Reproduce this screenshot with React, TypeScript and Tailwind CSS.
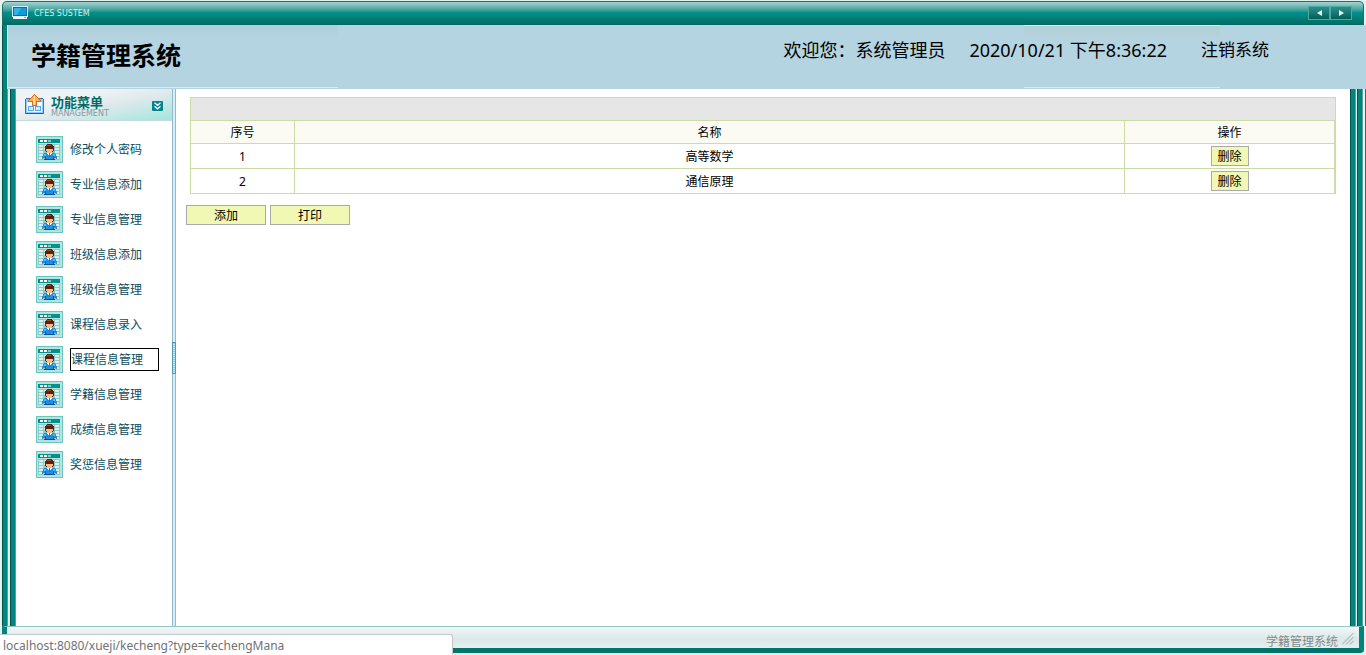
import { useState } from "react";

const menuItems = [
  "修改个人密码",
  "专业信息添加",
  "专业信息管理",
  "班级信息添加",
  "班级信息管理",
  "课程信息录入",
  "课程信息管理",
  "学籍信息管理",
  "成绩信息管理",
  "奖惩信息管理",
];

const initialCourses = [
  { id: 1, name: "高等数学" },
  { id: 2, name: "通信原理" },
];

function MonitorIcon() {
  return (
    <svg width="16" height="13" viewBox="0 0 16 13" shapeRendering="crispEdges" aria-hidden="true">
      <rect width="16" height="11" fill="#d5eef5" />
      <rect x="1" y="1" width="14" height="9" fill="#0a6fa8" />
      <rect x="2" y="2" width="12" height="7" fill="#129bd6" />
      <path d="M2 2h7l-4 7H2z" fill="#2fb4e6" />
      <rect x="1" y="11" width="14" height="2" fill="#f4f4ee" />
      <rect x="12" y="11" width="2" height="1" fill="#e08a3c" />
    </svg>
  );
}

function UploadIcon() {
  return (
    <svg width="19" height="21" viewBox="0 0 19 21" shapeRendering="crispEdges" aria-hidden="true">
      <path d="M1 4h17v1h1v15H0V5h1z" fill="#2a78d6" />
      <rect x="1" y="5" width="17" height="14" fill="#8ecbfa" />
      <rect x="1" y="19" width="17" height="1" fill="#2459a8" />
      <rect x="2" y="8" width="15" height="10" fill="#f2faff" />
      <path d="M3 12h6v5H3zM10 12h6v5h-6z" fill="#5aa6ea" />
      <path d="M4 13h4v3H4zM11 13h4v3h-4z" fill="#d2ebff" />
      <path d="M9 0h1v1h1v1h1v1h1v1h1v1h1v1h1v2h-4v4H7V8H3V6h1V5h1V4h1V3h1V2h1V1h1z" fill="#e8690f" />
      <path d="M9 1h1v1h1v1h1v1h1v1h1v1h1v1h-4v4H8V7H4V6h1V5h1V4h1V3h1V2h1z" fill="#fdb04a" />
      <path d="M9 2h1v9H8V5h1z" fill="#ffdca0" />
    </svg>
  );
}

function CollapseIcon() {
  return (
    <svg width="11" height="10" viewBox="0 0 11 10" aria-hidden="true">
      <rect width="11" height="10" rx="1" fill="#008490" />
      <path d="M2.500 1.800L5.500 4.300l3-2.500M2.500 5.300l3 2.500 3-2.500" fill="none" stroke="#fff" strokeWidth="1.300" />
    </svg>
  );
}

function UserCardIcon() {
  return (
    <svg width="27" height="27" viewBox="0 0 27 27" shapeRendering="crispEdges" className="shrink-0" aria-hidden="true">
      <rect width="27" height="27" fill="#6cc5be" />
      <rect x="1" y="1" width="25" height="25" fill="#b4e4e0" />
      <rect x="2" y="3" width="22" height="4" fill="#00928a" />
      <path d="M4 4h3v2H4zM8 4h3v2H8z" fill="#fff" />
      <path d="M12 4h3v2h-3z" fill="#7fd0ca" />
      <rect x="2" y="8" width="22" height="16" fill="#8ccbc6" />
      <path d="M3 9h4v2H3zM8 9h10v2H8zM19 9h4v2h-4zM3 12h4v2H3zM8 12h10v2H8zM19 12h4v2h-4zM3 15h4v2H3zM19 15h4v2h-4zM3 18h4v2H3zM19 18h4v2h-4zM3 21h20v2H3z" fill="#d8f0ed" />
      <path d="M11 8h5v1h1v1h1v5h-1v1h-7v-1H9v-5h1V9h1z" fill="#5e1f0e" />
      <path d="M10 13h7v2h-1v2h-5v-2h-1z" fill="#f7bd82" />
      <path d="M11 9h4v1h-4z" fill="#a34b22" />
      <path d="M8 17h11v1h1v2h1v3H6v-3h1v-2h1z" fill="#1c8fe0" />
      <path d="M8 18h2v2H8zM17 18h2v2h-2z" fill="#5cbcf7" />
      <path d="M9 20h1v3H9zM17 20h1v3h-1z" fill="#0a5cb0" />
      <path d="M7 22h2v1H7zM18 22h2v1h-2z" fill="#f2a868" />
      <path d="M11 17h5v1h-1v1h-3v-1h-1z" fill="#fff" />
      <path d="M13 17h1v4h-1z" fill="#e0321c" />
      <path d="M8 23h11v1H8z" fill="#0a4c9a" />
    </svg>
  );
}

/* thin metallic strips that run down both sides of the window */
function Rail() {
  return <div className="w-[6px] shrink-0 border-l border-r border-l-[#00544c] border-r-[#5b9f98] bg-[#00847b]" />;
}

function PagerButton({ label, flip = false }: { label: string; flip?: boolean }) {
  return (
    <button
      type="button"
      aria-label={label}
      className="flex h-[14px] w-[22px] items-center justify-center border border-[#4fa8a2] bg-linear-to-b from-[#2b8f8b] to-[#00605c]"
    >
      <svg width="5" height="6" viewBox="0 0 5 6" aria-hidden="true">
        <path d={flip ? "M0 0l5 3-5 3z" : "M5 0L0 3l5 3z"} fill="#e2f6f4" />
      </svg>
    </button>
  );
}

function TitleBar() {
  return (
    <div className="mx-[2px] mt-px flex h-6 shrink-0 items-center justify-between rounded-t-[5px] border border-b-0 border-[#1f6f69] bg-linear-to-b from-[#a5d5d3] via-[#00918b] via-45% to-[#006b62] pr-[11px] pb-[2px] pl-[9px]">
      <div className="flex items-center gap-[6px]">
        <MonitorIcon />
        <span className="pt-[2px] font-['DejaVu_Sans',sans-serif] text-[8px] leading-none text-[#d0efec]">CFES SUSTEM</span>
      </div>
      <div className="flex">
        <PagerButton label="后退" />
        <PagerButton label="前进" flip />
      </div>
    </div>
  );
}

function Banner() {
  return (
    <header className="relative flex h-16 shrink-0 items-start justify-between border-l border-[#d5e9ee] bg-[#b5d4e2] pr-[97px] pl-[23px]">
      <div className="absolute top-0 left-0 h-[63px] w-[330px] border-b border-[#d6ecf2] bg-linear-to-b from-[#afcfdc] to-[#b5d4e2] to-25%" />
      <div className="absolute top-0 right-[146px] h-[63px] w-[196px] border-t border-b border-[#d6eef3] bg-linear-to-b from-[#b3cfd4] to-[#b5d4e2] to-25%" />
      <h1 className="relative pt-3 text-[25px] leading-9 font-bold">学籍管理系统</h1>
      <div className="relative flex pt-3 text-[18px] leading-[26px]">
        <span className="mr-6">欢迎您：系统管理员</span>
        <span className="mr-[34px]">2020/10/21 下午8:36:22</span>
        <a href="#logout" className="text-[17px]">注销系统</a>
      </div>
    </header>
  );
}

function Sidebar({ active, onSelect }: { active: string; onSelect: (item: string) => void }) {
  return (
    <aside className="w-[156px] shrink-0 bg-white">
      <div className="flex h-8 items-center border-b border-[#c5dcdc] bg-linear-to-br from-[#f0f3f5] from-30% via-[#dfe9ec] via-55% to-[#9fe6de] pr-[9px] pl-[9px]">
        <UploadIcon />
        <div className="ml-[7px] grow pt-[2px]">
          <div className="text-[13px] leading-4 font-bold text-[#006b66]">功能菜单</div>
          <div className="font-['DejaVu_Sans',sans-serif] text-[8px] leading-[8px] text-[#8b9999]">MANAGEMENT</div>
        </div>
        <button type="button" aria-label="收起菜单" className="pt-[2px]">
          <CollapseIcon />
        </button>
      </div>
      <nav className="flex flex-col gap-2 pt-[15px] pl-5">
        {menuItems.map((item) => (
          <div key={item} className="flex items-center gap-[7px]">
            <UserCardIcon />
            <a
              href="#menu"
              onClick={() => onSelect(item)}
              className={
                item === active
                  ? "w-[89px] border border-black text-[12px] leading-[21px] text-[#0b4d5c]"
                  : "w-[89px] border-y border-transparent text-[12px] leading-[21px] text-[#0b4d5c]"
              }
            >
              {item}
            </a>
          </div>
        ))}
      </nav>
    </aside>
  );
}

function Divider() {
  return (
    <div className="flex w-1 shrink-0 flex-col justify-center border-x border-[#94b9c8] bg-[#d5eefa]">
      <div className="-mx-px h-8 border border-[#4f9db8] bg-[repeating-linear-gradient(#8ccbe0_0_1px,#c5e8f4_1px_2px)]" />
    </div>
  );
}

function CourseTable() {
  const [courses, setCourses] = useState(initialCourses);

  function remove(id: number) {
    setCourses(courses.filter((c) => c.id !== id));
  }

  return (
    <main className="grow bg-white pt-2 pr-[14px] pl-[10px] text-[12px]">
      <div className="ml-1 border border-[#cbdca5]">
        <div className="h-[22px] bg-[#e6e6e6]" />
        <table className="w-full table-fixed border-separate border-spacing-0 text-center leading-[18px]">
          <thead>
            <tr className="h-[23px] bg-[#fbfbf3]">
              <th className="w-[104px] border-t border-r border-[#cbdca5] pt-[2px] font-normal">序号</th>
              <th className="border-t border-r border-[#cbdca5] pt-[2px] font-normal">名称</th>
              <th className="w-[210px] border-t border-r border-[#cbdca5] pt-[2px] font-normal">操作</th>
            </tr>
          </thead>
          <tbody>
            {courses.map((c) => (
              <tr key={c.id} className="h-[25px]">
                <td className="border-t border-r border-[#cbdca5] pt-[2px]">{c.id}</td>
                <td className="border-t border-r border-[#cbdca5] pt-[2px]">{c.name}</td>
                <td className="border-t border-r border-[#cbdca5]">
                  <button
                    type="button"
                    onClick={() => remove(c.id)}
                    className="mx-auto block h-5 w-[38px] border border-[#a9a9a9] bg-[#f0f8b3] pt-px leading-[18px]"
                  >
                    删除
                  </button>
                </td>
              </tr>
            ))}
          </tbody>
        </table>
      </div>
      <div className="mt-[11px] flex gap-1">
        <button type="button" className="h-5 w-20 border border-[#a9a9a9] bg-[#f0f8b3] pt-px leading-[18px]">添加</button>
        <button type="button" className="h-5 w-20 border border-[#a9a9a9] bg-[#f0f8b3] pt-px leading-[18px]">打印</button>
      </div>
    </main>
  );
}

export default function App() {
  const [active, setActive] = useState("课程信息管理");

  return (
    <div className="flex h-screen flex-col bg-[#e3f2ee] font-['Noto_Sans','Noto_Sans_CJK_SC',sans-serif] text-black">
      <TitleBar />
      <div className="flex min-h-0 grow pl-[2px]">
        <Rail />
        <div className="-ml-px flex min-w-0 grow flex-col">
          <Banner />
          <div className="flex min-h-0 grow">
            <div className="w-[3px] shrink-0" />
            <Rail />
            <Sidebar active={active} onSelect={setActive} />
            <Divider />
            <CourseTable />
            <div className="flex shrink-0 gap-px">
              <Rail />
              <Rail />
              <div className="w-[2px] border-r border-[#00847b]" />
            </div>
          </div>
        </div>
      </div>
      <footer className="mr-[2px] mb-[2px] ml-[2px] flex h-[27px] shrink-0 items-start justify-end rounded-b-[4px] border-t border-r-[5px] border-b-[5px] border-l-[5px] border-t-[#93c4c8] border-r-[#00847b] border-b-[#00756c] border-l-[#00847b] bg-linear-to-b from-[#f2f7f8] via-[#dbe7e9] via-60% to-[#e6efef] pr-[5px]">
        <span className="pt-[5px] text-[12px] leading-5 text-[#848b8b]">学籍管理系统</span>
        <svg width="12" height="12" viewBox="0 0 12 12" className="mt-[6px] ml-1" aria-hidden="true">
          <path d="M0 11.500L11.500 0M4 11.500L11.500 4M8 11.500L11.500 8" stroke="#98a8aa" fill="none" />
        </svg>
      </footer>
      {/* browser link preview */}
      <div className="fixed bottom-0 left-0 h-[21px] w-[453px] rounded-tr-[3px] border-t border-r border-[#c2c8c8] bg-white pl-[3px] text-[12px] leading-[21px] text-[#6f7276]">
        localhost:8080/xueji/kecheng?type=kechengMana
      </div>
    </div>
  );
}
